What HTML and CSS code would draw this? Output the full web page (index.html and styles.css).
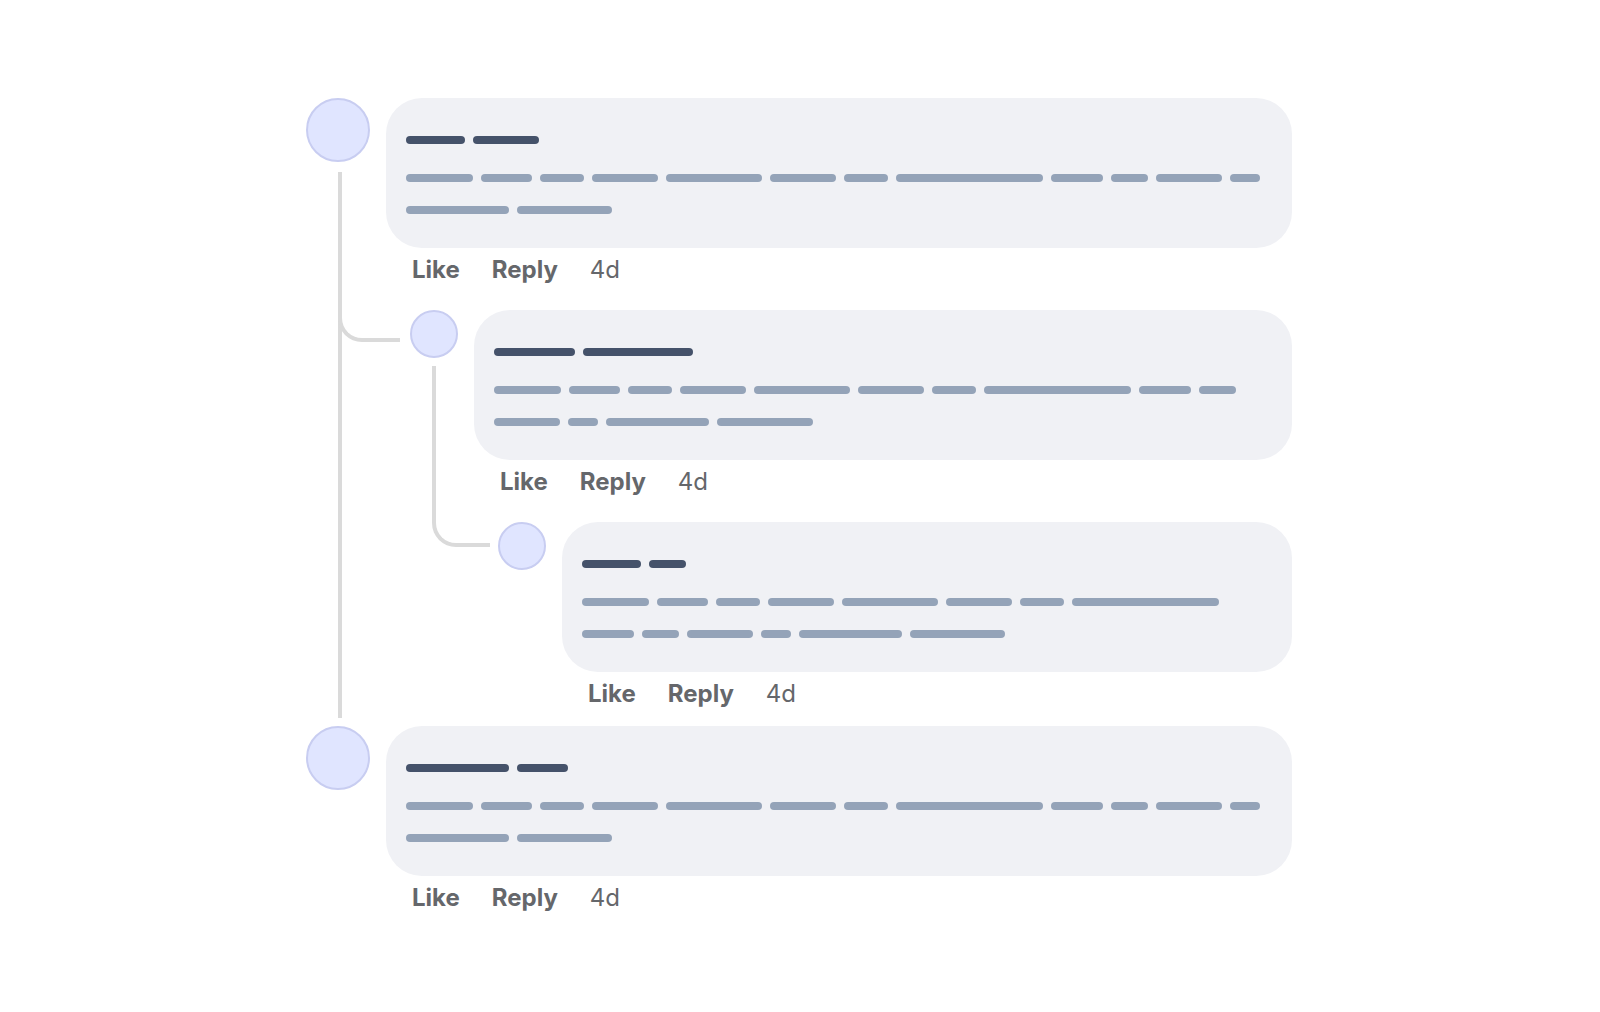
FILE: index.html
```html
<!DOCTYPE html>
<html lang="en">
<head>
<meta charset="utf-8">
<title>Comment thread skeleton</title>
<link rel="stylesheet" href="styles.css">
</head>
<body>
<div class="thread">
  <div class="comment root">
    <span class="thread-line"></span>
    <div class="avatar lg"></div>
    <div class="main">
      <div class="card">
        <div class="title"><span class="bar dark" style="width:59px"></span><span class="bar dark" style="width:66px"></span></div>
        <div class="text">
          <span class="bar" style="width:66.5px"></span><span class="bar" style="width:51.3px"></span><span class="bar" style="width:44.4px"></span><span class="bar" style="width:66.2px"></span><span class="bar" style="width:95.4px"></span><span class="bar" style="width:66.2px"></span><span class="bar" style="width:44.4px"></span><span class="bar" style="width:147px"></span><span class="bar" style="width:51.8px"></span><span class="bar" style="width:37px"></span><span class="bar" style="width:66.2px"></span><span class="bar" style="width:30px"></span><span class="bar" style="width:103px"></span><span class="bar" style="width:95.4px"></span>
        </div>
      </div>
      <div class="actions"><span class="act">Like</span><span class="act">Reply</span><span class="time">4d</span></div>
      <div class="replies">
        <div class="comment reply">
          <span class="connector c1"></span>
          <div class="avatar sm"></div>
          <div class="main">
            <div class="card">
              <div class="title"><span class="bar dark" style="width:81px"></span><span class="bar dark" style="width:110px"></span></div>
              <div class="text">
                <span class="bar" style="width:66.5px"></span><span class="bar" style="width:51.3px"></span><span class="bar" style="width:44.4px"></span><span class="bar" style="width:66.2px"></span><span class="bar" style="width:95.4px"></span><span class="bar" style="width:66.2px"></span><span class="bar" style="width:44.4px"></span><span class="bar" style="width:147px"></span><span class="bar" style="width:51.8px"></span><span class="bar" style="width:37px"></span><span class="bar" style="width:66.2px"></span><span class="bar" style="width:30px"></span><span class="bar" style="width:103px"></span><span class="bar" style="width:95.4px"></span>
              </div>
            </div>
            <div class="actions"><span class="act">Like</span><span class="act">Reply</span><span class="time">4d</span></div>
            <div class="replies">
              <div class="comment reply">
                <span class="connector c2"></span>
                <div class="avatar sm"></div>
                <div class="main">
                  <div class="card">
                    <div class="title"><span class="bar dark" style="width:59px"></span><span class="bar dark" style="width:37px"></span></div>
                    <div class="text">
                      <span class="bar" style="width:66.5px"></span><span class="bar" style="width:51.3px"></span><span class="bar" style="width:44.4px"></span><span class="bar" style="width:66.2px"></span><span class="bar" style="width:95.4px"></span><span class="bar" style="width:66.2px"></span><span class="bar" style="width:44.4px"></span><span class="bar" style="width:147px"></span><span class="bar" style="width:51.8px"></span><span class="bar" style="width:37px"></span><span class="bar" style="width:66.2px"></span><span class="bar" style="width:30px"></span><span class="bar" style="width:103px"></span><span class="bar" style="width:95.4px"></span>
                    </div>
                  </div>
                  <div class="actions"><span class="act">Like</span><span class="act">Reply</span><span class="time">4d</span></div>
                </div>
              </div>
            </div>
          </div>
        </div>
      </div>
    </div>
  </div>

  <div class="comment root">
    <div class="avatar lg"></div>
    <div class="main">
      <div class="card">
        <div class="title"><span class="bar dark" style="width:103px"></span><span class="bar dark" style="width:51px"></span></div>
        <div class="text">
          <span class="bar" style="width:66.5px"></span><span class="bar" style="width:51.3px"></span><span class="bar" style="width:44.4px"></span><span class="bar" style="width:66.2px"></span><span class="bar" style="width:95.4px"></span><span class="bar" style="width:66.2px"></span><span class="bar" style="width:44.4px"></span><span class="bar" style="width:147px"></span><span class="bar" style="width:51.8px"></span><span class="bar" style="width:37px"></span><span class="bar" style="width:66.2px"></span><span class="bar" style="width:30px"></span><span class="bar" style="width:103px"></span><span class="bar" style="width:95.4px"></span>
        </div>
      </div>
      <div class="actions"><span class="act">Like</span><span class="act">Reply</span><span class="time">4d</span></div>
    </div>
  </div>
</div>
</body>
</html>
```

FILE: styles.css
```css
* { box-sizing: border-box; }

body {
  margin: 0;
  background: #ffffff;
  font-family: Inter, "Noto Sans", "Liberation Sans", sans-serif;
}

.thread {
  padding: 98px 0 0 306px;
  width: 1292px;
}

.comment {
  position: relative;
  display: flex;
  align-items: flex-start;
  gap: 16px;
}

.root + .root { margin-top: 16px; }

.main {
  flex: 1;
  min-width: 0;
}

.avatar {
  flex: none;
  border-radius: 50%;
  background: #e0e5ff;
  border: 2px solid #c8cdf1;
}
.avatar.lg { width: 64px; height: 64px; }
.avatar.sm { width: 48px; height: 48px; }

.card {
  background: #f0f1f5;
  border-radius: 36px;
  padding: 38px 20px 34px;
}

.title {
  display: flex;
  gap: 8px;
  height: 8px;
}

.text {
  display: flex;
  flex-wrap: wrap;
  column-gap: 8px;
  row-gap: 24px;
  margin-top: 30px;
}

.bar {
  flex: none;
  display: block;
  height: 8px;
  border-radius: 4px;
  background: #94a3b8;
}
.bar.dark { background: #45526a; }

.actions {
  display: flex;
  gap: 32px;
  margin-top: 6px;
  padding-left: 26px;
  font-size: 24px;
  line-height: 32px;
  color: #65676b;
}
.act { font-weight: 700; }
.time { font-weight: 400; }

.replies {
  margin-top: 24px;
  padding-left: 24px;
}

.replies .replies { margin-top: 24px; }

.thread-line {
  position: absolute;
  left: 32px;
  top: 74px;
  bottom: -8px;
  width: 4px;
  background: #dadada;
}

.connector {
  position: absolute;
  border-left: 4px solid #dadada;
  border-bottom: 4px solid #dadada;
  border-bottom-left-radius: 24px;
}
.c1 { left: -72px; top: -8px; width: 62px; height: 40px; }
.c2 { left: -66px; top: -156px; width: 58px; height: 181px; }

.root:last-child .actions { margin-top: 6px; }
```
